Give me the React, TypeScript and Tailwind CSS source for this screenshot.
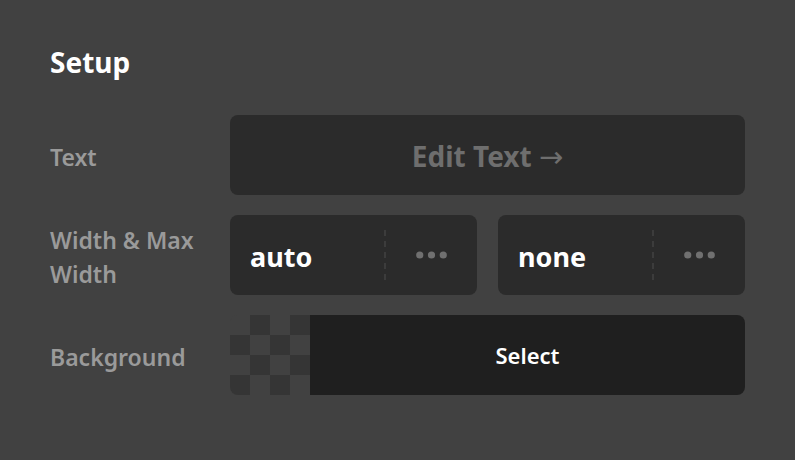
const font = { fontFamily: '"Noto Sans", "Open Sans", sans-serif' };

const Dots = () => (
  <svg width="31" height="8" viewBox="0 0 31 8" fill="#707070">
    <circle cx="3.75" cy="4" r="3.6" />
    <circle cx="15.5" cy="4" r="3.6" />
    <circle cx="27.25" cy="4" r="3.6" />
  </svg>
);

const ValueBox = ({ value }: { value: string }) => (
  <div className="flex-1 h-20 rounded-lg bg-[#2b2b2b] flex items-center">
    <div className="flex-1 pl-5 pt-1 text-[27px] font-bold text-white">{value}</div>
    <div className="h-[50px] border-l-2 border-dashed border-[#3c3c3c]" />
    <div className="w-[91px] flex justify-center">
      <Dots />
    </div>
  </div>
);

const Checker = () => {
  const cells = Array.from({ length: 16 }, (_, i) => {
    const dark = (Math.floor(i / 4) + (i % 4)) % 2 === 1;
    return <div key={i} className={dark ? "bg-[#353535]" : "bg-[#414141]"} />;
  });
  return <div className="w-20 h-20 grid grid-cols-4 grid-rows-4 rounded-l-lg overflow-hidden">{cells}</div>;
};

const Row = ({ label, children }: { label: React.ReactNode; children: React.ReactNode }) => (
  <div className="flex items-center">
    <div className="w-[180px] pt-1 text-[23px] font-semibold text-[#9a9a9a] leading-[34px]">{label}</div>
    <div className="flex-1 flex gap-[21px]">{children}</div>
  </div>
);

export default function App() {
  return (
    <div className="w-[795px] h-[460px] bg-[#414141] px-[50px] pt-[42px]" style={font}>
      <h1 className="text-[28px] font-bold text-white leading-10">Setup</h1>
      <div className="mt-[33px] space-y-5">
        <Row label="Text">
          <button className="flex-1 h-20 pt-1 rounded-lg bg-[#2b2b2b] text-[28px] font-bold text-[#6e6e6e]">
            Edit Text <span className="font-['DejaVu_Sans'] font-normal text-[29px]">→</span>
          </button>
        </Row>
        <Row label={<>Width &amp; Max<br />Width</>}>
          <ValueBox value="auto" />
          <ValueBox value="none" />
        </Row>
        <Row label="Background">
          <div className="flex-1 flex">
            <Checker />
            <button className="flex-1 h-20 rounded-r-lg bg-[#1f1f1f] text-[22px] font-semibold text-white">
              Select
            </button>
          </div>
        </Row>
      </div>
    </div>
  );
}
